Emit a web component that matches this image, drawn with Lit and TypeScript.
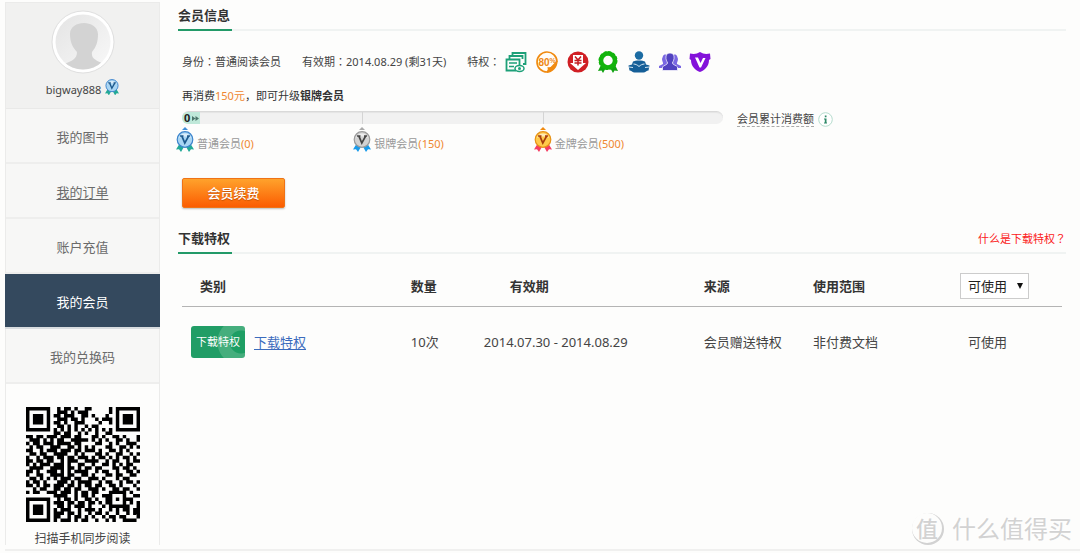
import { LitElement, html, css, svg } from "lit";
import { customElement, property } from "lit/decorators.js";

const QR_ROWS = [
  "#######..#.##.#..##.....#.#######",
  "#.....#..###.#.###......#.#.....#",
  "#.###.#.##.###..##.#...#..#.###.#",
  "#.###.#..###.##.#...#.###.#.###.#",
  "#.###.#.##.#..###....#..#.#.###.#",
  "#.....#..##.#.#..#.##.....#.....#",
  "#######.#.#.#.#.#.#.#.#.#.#######",
  "........##.##..#.#..#..##........",
  "##.##.###.###.##...##.#..##.#...#",
  ".###.#.#.##..#####.#.#.#..##.#..#",
  "#.##.###.####.##....##..#.#..###.",
  ".#.##..###..##.#.#.#...##..##.#.#",
  "##..#.###.###.##.###.#..##.#.#...",
  ".##.##..####..#.#...##.#..##..#.#",
  "#..#.###.##.##.###.#.##.#.#.##.#.",
  "##.##.##..#.###..####..#.##..#.##",
  "#.#.###.###.#..##..#..##.#.#.##..",
  ".####..####.##.#.##.##...##.##.#.",
  "##.#..###.#.#.####..#.##..#..##.#",
  "#..##..####.##..##.#...##.##..##.",
  ".##.#.#.#.###.##..###.#...#.##...",
  "#.##.#...###.#.####..#.##..#.##.#",
  "##.#.##.###.##.#.##.##..##.#...#.",
  "..#.##..##.##.##..###.#..##.##..#",
  "#.##..###.###.#.##.##...#####.#..",
  "........####..#.##.#..###...#..##",
  "#######..#.##.#..##.#..##.#.###..",
  "#.....#.###.##.##.##.#.##...#.#.#",
  "#.###.#..##.#.###.#...#.######..#",
  "#.###.#.#.###..#.###.#..#.#.##.##",
  "#.###.#.###.##.#..#.##.#..#..#.##",
  "#.....#.##..#.##.#.#..#.##.##...#",
  "#######.#.###.#.##..#..#.#..####.",
];

const QR_PATH = QR_ROWS.map((row, y) =>
  [...row].map((c, x) => (c === "#" ? `M${x} ${y}h1v1h-1z` : "")).join("")
).join("");

const PRIVILEGES = [
  {
    name: "文档",
    art: svg`<g fill="none" stroke="#1da078" stroke-width="1.8">
      <path d="M7.500 5V2h13v11h-2.500"/><path d="M4.500 8V5h13v3"/>
      <path d="M11 19.500H1.500V8.500h13V14"/><path d="M4 12h8M4 15.500h5" stroke-width="1.500"/>
      <ellipse cx="14.500" cy="17.500" rx="4.500" ry="3" fill="#fff" stroke-width="1.500"/></g>
      <circle cx="14.500" cy="17.500" r="1.500" fill="#1da078"/>`,
  },
  {
    name: "八折",
    art: svg`<path d="M21 10.500A10 10 0 1 0 11 21z" fill="#fffdf8" stroke="#f08a10" stroke-width="1.700"/>
      <path d="M10.500 22c2-2 1-6 1-6 5 1 7-2 10-6 .5 6-5 12-11 12z" fill="#f08a10"/>
      <text x="2.500" y="14.500" font-size="10" font-weight="700" fill="#ee8712">80</text>
      <text x="13.500" y="12" font-size="7" font-weight="700" fill="#ee8712">%</text>`,
  },
  {
    name: "返现",
    art: svg`<circle cx="11" cy="11" r="10.500" fill="#d01f24"/>
      <path d="M6 4h10v8h3l-8 7-8-7h3z" fill="#fff"/>
      <path d="M8 5.500l3 3.500 3-3.500M7.500 9.500h7M7.500 12h7M11 9v5.500" fill="none" stroke="#c51c20" stroke-width="1.500"/>`,
  },
  {
    name: "勋章",
    art: svg`<path d="M5 12L1 20l3.500-.5L6 22l4-7zM17 12l4 8-3.500-.5L16 22l-4-7z" fill="#12a312"/>
      <circle cx="11" cy="9.500" r="7" fill="none" stroke="#12b30c" stroke-width="4.500"/>
      <circle cx="11" cy="9.500" r="8.800" fill="none" stroke="#12b30c" stroke-width="1.400" stroke-dasharray="3 1.600"/>`,
  },
  {
    name: "阅读",
    art: svg`<circle cx="11" cy="4.500" r="4.200" fill="#1c6ca3"/>
      <path d="M5 10.500c2-1.500 10-1.500 12 0l1 3 3.500 1-1 5c-2 0-3 2-5 2h-9c-2 0-3-2-5-2l-1-5 3.500-1z" fill="#165f98"/>
      <path d="M5.500 13c2 0 4 1 5.500 2.500 1.500-1.500 3.500-2.500 5.500-2.500M1 16l4 .5M21 16l-4 .5" fill="none" stroke="#d8e9f5" stroke-width="1"/>`,
  },
  {
    name: "社群",
    art: svg`<path d="M4 5c2-3 5-1 5 2s-1 4-1 5l3 3v2H0v-2l4-2c.5-1-1-3-1-5zM18 5c-2-3-5-1-5 2s1 4 1 5l-3 3v2h11v-2l-4-2c-.5-1 1-3 1-5z" fill="#7a67e2"/>
      <path d="M7 5c1-4 7-4 8 0 .5 4-1 5-1.500 7 0 2 4.500 2.500 5 4v3.500h-15V16c.5-1.500 5-2 5-4C8 10 6.500 9 7 5z" fill="#5142c0" stroke="#fff" stroke-width=".7"/>`,
  },
  {
    name: "尊享",
    art: svg`<path d="M11 1c3 2 6 2.500 10 1.500L21.500 8 20 9c0 6-4 10-9 12-5-2-9-6-9-12L.5 8 1 2.500C5 3.500 8 3 11 1z" fill="#8312da"/>
      <path d="M6 6.500h3L11.500 12l2.500-5h2.500L12 16.500h-1.500z" fill="#fff"/>`,
  },
];

@customElement("member-medal")
class MemberMedal extends LitElement {
  @property() tone = "blue";
  static styles = css`
    :host { display: block; flex: none; width: 18px; }
    svg { display: block; width: 100%; height: auto; }
  `;
  render() {
    const tones: Record<string, string[]> = {
      blue: ["#a9d5f3", "#3c84cc", "#22a996", "#1d598d"],
      silver: ["#d2d2d2", "#9a9a9a", "#199bea", "#444444"],
      gold: ["#ffc94a", "#e79115", "#f53c62", "#a63c0c"],
    };
    const [face, rim, ribbon, letter] = tones[this.tone];
    return html`<svg viewBox="0 0 18 21" aria-hidden="true">
      <path d="M4 12L0 18.500l3-.3L5 21l4-7zM14 12l4 6.500-3-.3L13 21l-4-7z" fill=${ribbon} />
      <circle cx="9" cy="8.500" r="7.800" fill=${face} stroke=${rim} stroke-width="1.200" />
      <path d="M3 7c1-6 11-6 12 0-3-2-9-2-12 0z" fill="#fff" opacity=".6" />
      <path d="M4 5h3.500M11 5h3M6 5.300L8.800 12 12.500 5.300" fill="none" stroke=${letter} stroke-width="1.700" />
    </svg>`;
  }
}

@customElement("app-root")
class AppRoot extends LitElement {
  static styles = css`
    :host {
      display: block;
      background: #fdfdfc;
      min-height: 100vh;
      color: #444;
      font-family: "Noto Sans", "Noto Sans CJK SC", sans-serif;
      font-size: 13px;
      line-height: 20px;
      position: relative;
    }
    * { box-sizing: border-box; }
    a { color: inherit; text-decoration: none; }
    h2 { margin: 0; font-size: 13px; line-height: 20px; font-weight: 600; color: #333; }
    .frame {
      display: flex;
      align-items: flex-start;
      margin-left: 5px;
      padding: 2px 0 4px;
      border-bottom: 2px solid #f0f0ef;
    }
    .side { flex: none; width: 155px; border: 1px solid #ebebea; border-bottom: 0; }
    .profile {
      display: flex;
      flex-direction: column;
      align-items: center;
      height: 106px;
      padding-top: 7px;
      background: #f1f1f0;
      border-bottom: 1px solid #e9e9e8;
    }
    .avatar { display: block; width: 64px; height: 64px; }
    .user { display: flex; align-items: center; gap: 4px; margin-top: 5px; font-size: 11px; line-height: 22px; }
    .user member-medal { width: 14px; margin-bottom: 6px; }
    .menu a {
      display: block;
      height: 55px;
      border-bottom: 2px solid #eeeeed;
      background: #f7f7f6;
      color: #6b6b6b;
      text-align: center;
      line-height: 57px;
    }
    .menu .hover { text-decoration: underline; text-underline-offset: 2px; }
    .menu .active { margin: 0 -1px; background: #34495e; border-bottom-color: #d8dcdf; color: #fff; }
    .qr { display: flex; flex-direction: column; align-items: center; padding-top: 23px; font-size: 12px; line-height: 12px; }
    .qr svg { display: block; width: 114px; height: 115px; margin-bottom: 11px; }
    .main { flex: 1; min-width: 0; padding: 3px 14px 0 18px; }
    .title {
      display: flex;
      justify-content: space-between;
      height: 26px;
      border-bottom: 2px solid #f0f3f2;
    }
    .title h2 { width: 54px; height: 26px; border-bottom: 2px solid #229a68; }
    .help { font-size: 11px; color: #fb2020; }
    .body { padding: 0 4px; }
    .facts { display: flex; align-items: center; gap: 21px; height: 22px; margin-top: 20px; font-size: 11px; line-height: 16px; }
    .facts > span, .privs > span { margin-bottom: 2px; }
    .wide { font-family: "Noto Sans CJK TC", sans-serif; }
    .privs { display: flex; align-items: center; gap: 5px; }
    .icons { display: flex; justify-content: space-between; width: 206px; margin: 0; padding: 0; list-style: none; }
    .icons svg { display: block; width: 22px; height: 22px; font-family: "Liberation Sans", sans-serif; }
    .tip { margin: 13px 0 5px; font-size: 11px; color: #333; }
    .tip strong { font-weight: 600; }
    .num { color: #ef8730; }
    .progress { display: flex; align-items: flex-start; gap: 14px; }
    .gauge { width: 541px; }
    .bar {
      display: grid;
      grid-template-columns: repeat(3, 1fr);
      height: 13px;
      border-top: 1px solid #d9d9d9;
      border-radius: 7px;
      background: #f1f1f1;
      box-shadow: inset 0 1px 1px #e4e4e4;
    }
    .step { border-left: 1px solid #d4d4d4; }
    .zero {
      display: flex;
      align-items: center;
      gap: 2px;
      width: 18px;
      height: 12px;
      padding-left: 2px;
      border-radius: 6px 0 0 6px;
      background: #bfe8d9;
      color: #222;
      font-size: 11px;
      font-weight: 700;
      line-height: 16px;
    }
    .zero svg { width: 7px; height: 5px; }
    .levels {
      display: grid;
      grid-template-columns: repeat(3, 1fr);
      margin: 3px 0 0 -9px;
      padding: 0;
      list-style: none;
      font-size: 11px;
      color: #999;
      width: 541px;
    }
    .levels li { display: flex; gap: 3px; }
    .levels li:first-child { padding-left: 3px; }
    .levels p { margin: 7px 0 0; }
    .badge { display: flex; flex-direction: column; align-items: center; gap: 1px; }
    .badge svg { width: 6px; height: 3px; display: block; }
    .total { display: flex; align-items: center; gap: 4px; font-size: 11px; line-height: 15px; }
    .total span { border-bottom: 1px dashed #aaa; }
    .total svg { width: 15px; height: 15px; }
    .renew {
      display: block;
      width: 103px;
      height: 30px;
      margin: 24px 0 20px;
      padding: 0;
      border: 1px solid #ef7316;
      border-radius: 2px;
      background: linear-gradient(#ffa22c, #fb5c02);
      box-shadow: 0 1px 2px #bbb;
      color: #fff;
      font: 500 13px/26px "Noto Sans CJK SC", sans-serif;
      text-shadow: 0 1px 1px #c25000;
    }
    table { width: 100%; border-collapse: collapse; table-layout: fixed; margin-top: 12px; }
    th { height: 40px; padding: 0; border-bottom: 1px solid #b4b4b4; text-align: left; font-weight: 600; color: #333; }
    td { height: 72px; padding: 0; }
    .c1 { width: 26%; } .c2 { width: 8.3%; } .c3 { width: 25%; } .c4 { width: 12.4%; } .c5 { width: 16.7%; }
    .kind { padding-left: 18px; }
    .term { padding-left: 26px; }
    .state { padding-left: 8px; }
    .item { display: flex; align-items: center; gap: 9px; padding-left: 9px; }
    .item a { color: #3b6bbd; text-decoration: underline; text-underline-offset: 2px; }
    .ticket {
      width: 54px;
      height: 32px;
      border-radius: 3px;
      background: radial-gradient(circle at 50px 16px, #1e9e64 0 11px, #45ae7d 12px 23px, #219d66 24px);
      color: #fff;
      font-size: 11px;
      line-height: 32px;
      text-align: center;
    }
    .pick { position: relative; width: 69px; display: block; }
    select {
      appearance: none;
      display: block;
      width: 69px;
      height: 26px;
      margin: 0;
      padding: 0 7px;
      border: 1px solid #ccc;
      border-radius: 0;
      background: #fff;
      color: #222;
      font: 13px/20px "Noto Sans", "Noto Sans CJK SC", sans-serif;
    }
    .pick svg { position: absolute; right: 6px; top: 10px; width: 6px; height: 6px; pointer-events: none; }
    .mark {
      position: absolute;
      right: 8px;
      bottom: 8px;
      display: flex;
      align-items: center;
      gap: 10px;
      color: #d2d2d2;
      font: 24px/34px "Noto Sans CJK SC", sans-serif;
      text-shadow: -1px -1px 0 #fff;
    }
    .mark b {
      width: 30px;
      height: 30px;
      border-radius: 50%;
      box-shadow: 1px 1px 0 1px #d2d2d2;
      font-size: 22px;
      font-weight: 500;
      line-height: 28px;
      text-align: center;
    }
  `;

  private level(tone: string, tip: string, name: string, amount: number) {
    return html`<li>
      <div class="badge">
        <svg viewBox="0 0 6 3"><path d="M0 3L3 0l3 3z" fill=${tip} /></svg>
        <member-medal tone=${tone}></member-medal>
      </div>
      <p>${name}<span class="num">(${amount})</span></p>
    </li>`;
  }

  render() {
    const colon = html`<span class="wide" lang="zh-Hant">：</span>`;
    return html`
      <div class="frame">
        <aside class="side">
          <div class="profile">
            <svg class="avatar" viewBox="0 0 64 64" role="img" aria-label="头像">
              <defs>
                <clipPath id="face"><circle cx="32" cy="32" r="27.500" /></clipPath>
                <linearGradient id="sheen" x2="1" y2="1"><stop offset="0" stop-color="#e2e2e2" /><stop offset="1" stop-color="#fafafa" /></linearGradient>
              </defs>
              <circle cx="32" cy="32" r="31" fill="#fff" stroke="#dfdfdf" />
              <g clip-path="url(#face)">
                <rect width="64" height="64" fill="url(#sheen)" />
                <path d="M19 24c0-14 27-15 28 0 0 8-2 13-6 18-1 7 4 8 12 12v10H13V54c8-3 13-5 13-12-5-5-7-11-7-18z" fill="#d3d3d3" />
              </g>
            </svg>
            <div class="user">bigway888<member-medal tone="blue"></member-medal></div>
          </div>
          <nav class="menu">
            <a href="#books">我的图书</a>
            <a href="#orders" class="hover">我的订单</a>
            <a href="#recharge">账户充值</a>
            <a href="#member" class="active" aria-current="page">我的会员</a>
            <a href="#codes">我的兑换码</a>
          </nav>
          <div class="qr">
            <svg viewBox="0 0 33 33" preserveAspectRatio="none" role="img" aria-label="二维码"><path d=${QR_PATH} fill="#000" /></svg>
            扫描手机同步阅读
          </div>
        </aside>

        <main class="main">
          <section>
            <div class="title"><h2>会员信息</h2></div>
            <div class="body">
              <div class="facts">
                <span>身份${colon}普通阅读会员</span>
                <span>有效期${colon}2014.08.29 (剩31天)</span>
                <div class="privs">
                  <span>特权${colon}</span>
                  <ul class="icons">
                    ${PRIVILEGES.map((p) => html`<li><svg viewBox="0 0 22 22" role="img" aria-label=${p.name}>${p.art}</svg></li>`)}
                  </ul>
                </div>
              </div>
              <p class="tip">再消费<span class="num">150元</span>，即可升级<strong>银牌会员</strong></p>
              <div class="progress">
                <div class="gauge">
                  <div class="bar">
                    <div><div class="zero">0<svg viewBox="0 0 7 5"><path d="M0 0l3.500 2.500L0 5zM3.500 0L7 2.500 3.500 5z" fill="#4b756a" /></svg></div></div>
                    <div class="step"></div>
                    <div class="step"></div>
                  </div>
                  <ul class="levels">
                    ${this.level("blue", "#3f8fd8", "普通会员", 0)}
                    ${this.level("silver", "#aaaaaa", "银牌会员", 150)}
                    ${this.level("gold", "#f08a10", "金牌会员", 500)}
                  </ul>
                </div>
                <div class="total">
                  <span>会员累计消费额</span>
                  <svg viewBox="0 0 15 15" role="img" aria-label="说明">
                    <circle cx="7.500" cy="7.500" r="6.800" fill="#fff" stroke="#b5dccd" />
                    <path d="M6.800 3.500h1.700v1.700H6.800zM6 6.500h2.500v4H9v1H6v-1h.8v-3H6z" fill="#2f8a68" />
                  </svg>
                </div>
              </div>
              <button class="renew" type="button">会员续费</button>
            </div>
          </section>

          <section>
            <div class="title"><h2>下载特权</h2><a class="help" href="#help">什么是下载特权<span class="wide" lang="zh-Hant">？</span></a></div>
            <div class="body">
              <table>
                <colgroup><col class="c1" /><col class="c2" /><col class="c3" /><col class="c4" /><col class="c5" /><col /></colgroup>
                <thead>
                  <tr>
                    <th class="kind">类别</th><th>数量</th><th class="term">有效期</th><th>来源</th><th>使用范围</th>
                    <th>
                      <label class="pick">
                        <select aria-label="状态"><option>可使用</option></select>
                        <svg viewBox="0 0 6 6"><path d="M0 0h6L3 6z" fill="#111" /></svg>
                      </label>
                    </th>
                  </tr>
                </thead>
                <tbody>
                  <tr>
                    <td><div class="item"><span class="ticket">下载特权</span><a href="#download">下载特权</a></div></td>
                    <td>10次</td>
                    <td>2014.07.30 - 2014.08.29</td>
                    <td>会员赠送特权</td>
                    <td>非付费文档</td>
                    <td class="state">可使用</td>
                  </tr>
                </tbody>
              </table>
            </div>
          </section>
        </main>
      </div>
      <div class="mark"><b>值</b><span>什么值得买</span></div>
    `;
  }
}
